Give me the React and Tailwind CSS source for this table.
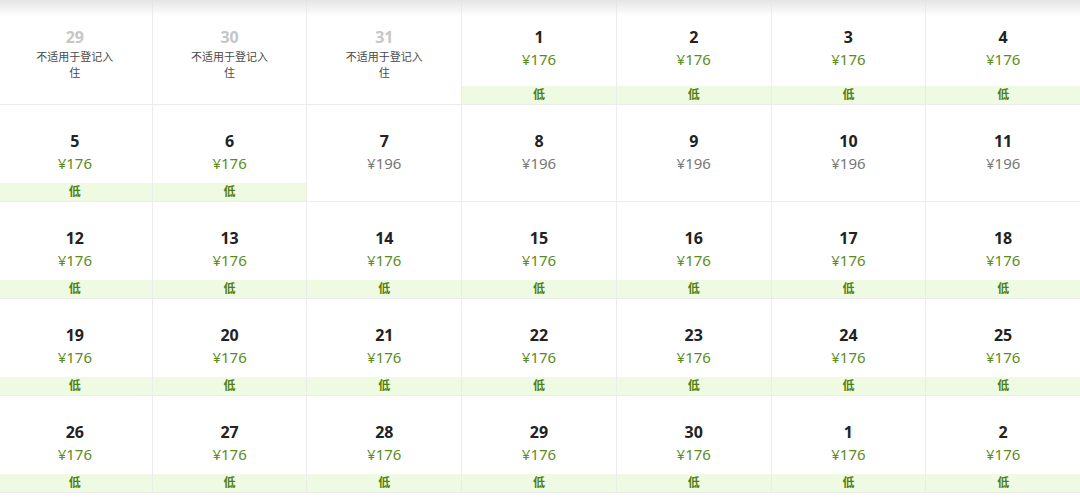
import React from 'react';

const rows = [
  [
    { d: 29, na: true },
    { d: 30, na: true },
    { d: 31, na: true },
    { d: 1, p: 176, low: true },
    { d: 2, p: 176, low: true },
    { d: 3, p: 176, low: true },
    { d: 4, p: 176, low: true },
  ],
  [
    { d: 5, p: 176, low: true },
    { d: 6, p: 176, low: true },
    { d: 7, p: 196 },
    { d: 8, p: 196 },
    { d: 9, p: 196 },
    { d: 10, p: 196 },
    { d: 11, p: 196 },
  ],
  [12, 13, 14, 15, 16, 17, 18].map((d) => ({ d, p: 176, low: true })),
  [19, 20, 21, 22, 23, 24, 25].map((d) => ({ d, p: 176, low: true })),
  [26, 27, 28, 29, 30, 1, 2].map((d) => ({ d, p: 176, low: true })),
];

function Cell({ cell }) {
  if (cell.na) {
    return (
      <div className="flex flex-col items-center pt-[25px] pb-[23px] border-r border-b border-[#ececec]">
        <div className="h-[22px] leading-[22px] text-[16px] font-bold text-[#c6c6c6]">{cell.d}</div>
        <div className="mt-[1px] w-[84px] text-center text-[11px] leading-[16px] text-[#4a4a4a]">不适用于登记入住</div>
      </div>
    );
  }
  return (
    <div className="flex flex-col items-center min-h-[97px] pt-[25px] border-r border-b border-[#ececec]">
      <div className="h-[22px] leading-[22px] text-[16px] font-bold text-[#222]">{cell.d}</div>
      <div className={`h-[22px] leading-[22px] text-[15px] ${cell.low ? 'text-[#5b8c1c]' : 'text-[#777]'}`}>
        ¥{cell.p}
      </div>
      {cell.low && (
        <div className="mt-auto w-full h-[18px] leading-[18px] bg-[#effae2] text-center text-[12px] font-bold text-[#4f8010]">
          低
        </div>
      )}
    </div>
  );
}

export default function App() {
  return (
    <div
      className="relative w-[1080px] h-[501px] overflow-hidden bg-white"
      style={{ fontFamily: '"Noto Sans", "Noto Sans CJK SC", sans-serif' }}
    >
      <div className="grid grid-cols-7 w-[1083px] -ml-[2px] mt-[1px]">
        {rows.flat().map((cell, i) => (
          <Cell key={i} cell={cell} />
        ))}
      </div>
      {/* top shadow */}
      <div className="absolute left-0 top-0 w-full h-[16px] bg-gradient-to-b from-[#e4e4e4] to-transparent pointer-events-none" />
    </div>
  );
}
